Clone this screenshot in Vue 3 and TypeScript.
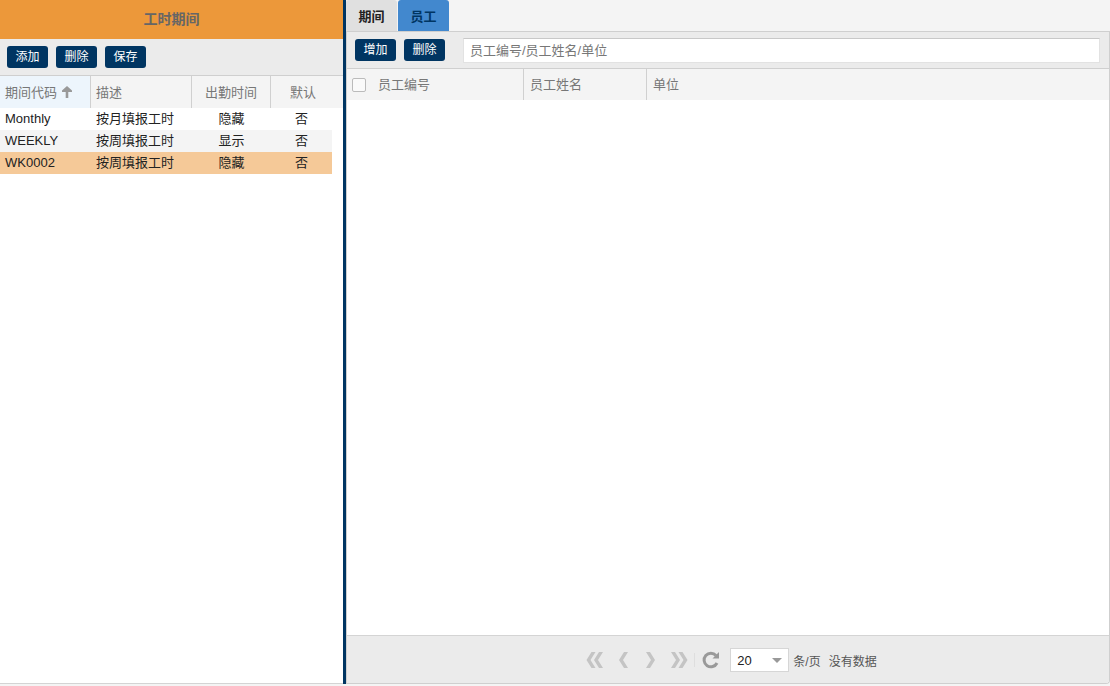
<script setup lang="ts">
import { ref } from 'vue'

interface Period {
  code: string
  description: string
  attendance: string
  isDefault: string
}

const periods: Period[] = [
  { code: 'Monthly', description: '按月填报工时', attendance: '隐藏', isDefault: '否' },
  { code: 'WEEKLY', description: '按周填报工时', attendance: '显示', isDefault: '否' },
  { code: 'WK0002', description: '按周填报工时', attendance: '隐藏', isDefault: '否' },
]

const selectedCode = ref('WK0002')
const activeTab = ref('员工')
const tabs = ['期间', '员工']
const keyword = ref('')
const pageSize = ref(20)
const allChecked = ref(false)
</script>

<template>
  <div class="page">
    <aside class="periods">
      <h1 class="title">工时期间</h1>
      <div class="toolbar">
        <button type="button" class="btn">添加</button>
        <button type="button" class="btn">删除</button>
        <button type="button" class="btn">保存</button>
      </div>
      <table class="grid period-grid">
        <colgroup>
          <col class="c-code" />
          <col class="c-desc" />
          <col class="c-att" />
          <col />
          <col class="c-gutter" />
        </colgroup>
        <thead>
          <tr>
            <th class="sorted" aria-sort="ascending">
              期间代码<svg class="arrow" viewBox="0 0 10 12" aria-hidden="true">
                <path d="M5 0 10 4.5V6H6.3V12H3.7V6H0V4.5Z" />
              </svg>
            </th>
            <th>描述</th>
            <th class="center">出勤时间</th>
            <th class="center last" colspan="2">默认</th>
          </tr>
        </thead>
        <tbody>
          <tr
            v-for="period in periods"
            :key="period.code"
            :class="{ selected: period.code === selectedCode }"
            @click="selectedCode = period.code"
          >
            <td>{{ period.code }}</td>
            <td>{{ period.description }}</td>
            <td class="center">{{ period.attendance }}</td>
            <td class="center">{{ period.isDefault }}</td>
            <td class="gutter"></td>
          </tr>
        </tbody>
      </table>
    </aside>

    <div class="splitter"></div>

    <main class="detail">
      <div class="tabs" role="tablist">
        <button
          v-for="tab in tabs"
          :key="tab"
          type="button"
          role="tab"
          class="tab"
          :class="{ active: tab === activeTab }"
          :aria-selected="tab === activeTab"
          @click="activeTab = tab"
        >{{ tab }}</button>
      </div>
      <section class="panel">
        <div class="toolbar staff-toolbar">
          <button type="button" class="btn">增加</button>
          <button type="button" class="btn">删除</button>
          <input
            v-model="keyword"
            class="search"
            type="text"
            placeholder="员工编号/员工姓名/单位"
            aria-label="员工编号/员工姓名/单位"
          />
        </div>
        <table class="grid staff-grid">
          <colgroup>
            <col class="c-check" />
            <col class="c-id" />
            <col class="c-name" />
            <col />
          </colgroup>
          <thead>
            <tr>
              <th class="check-cell">
                <input v-model="allChecked" class="check" type="checkbox" aria-label="全选" />
              </th>
              <th>员工编号</th>
              <th>员工姓名</th>
              <th class="last">单位</th>
            </tr>
          </thead>
        </table>
        <div class="empty"></div>
        <footer class="pager">
          <button type="button" class="nav" aria-label="首页" disabled>
            <svg viewBox="0 0 18 18"><path d="M5.5 1H9.5L4.5 9 9.5 17H5.5L0.5 9ZM13 1H17L12 9 17 17H13L8 9Z" /></svg>
          </button>
          <button type="button" class="nav" aria-label="上一页" disabled>
            <svg viewBox="0 0 18 18"><path d="M10 1H14L9 9 14 17H10L5 9Z" /></svg>
          </button>
          <button type="button" class="nav" aria-label="下一页" disabled>
            <svg viewBox="0 0 18 18"><path d="M8 1H4L9 9 4 17H8L13 9Z" /></svg>
          </button>
          <button type="button" class="nav" aria-label="末页" disabled>
            <svg viewBox="0 0 18 18"><path d="M5 1H1L6 9 1 17H5L10 9ZM12.5 1H8.5L13.5 9 8.5 17H12.5L17.5 9Z" /></svg>
          </button>
          <span class="divider"></span>
          <button type="button" class="nav refresh" aria-label="刷新">
            <svg viewBox="0 0 18 18">
              <path class="ring" d="M14 4.5A6.8 6.8 0 1 0 15 12" />
              <path d="M17 1V7.5H10.5Z" />
            </svg>
          </button>
          <span class="select-box">
            <select id="page-size" v-model="pageSize" class="size">
              <option :value="20">20</option>
              <option :value="50">50</option>
              <option :value="100">100</option>
            </select>
            <svg class="caret" viewBox="0 0 10 5" aria-hidden="true"><path d="M0 0H10L5 5Z" /></svg>
          </span>
          <label for="page-size">条/页</label>
          <span class="status">没有数据</span>
        </footer>
      </section>
    </main>
  </div>
</template>

<style>
body {
  background: #f4f4f4;
}
</style>

<style scoped>
.page {
  box-sizing: border-box;
  display: flex;
  height: 100vh;
  padding-bottom: 2px;
  font-family: 'Liberation Sans', 'Noto Sans CJK SC', sans-serif;
  font-size: 13px;
  color: #222;
}

.page *,
.page *::before {
  box-sizing: border-box;
}

button,
input,
select {
  font-family: inherit;
  margin: 0;
}

.periods {
  flex: 0 0 343px;
  background: #fff;
  border-bottom: 1px solid #d4d4d4;
}

.title {
  height: 39px;
  margin: 0;
  background: #ec983a;
  color: #666;
  font-size: 14px;
  line-height: 39px;
  text-align: center;
}

.toolbar {
  display: flex;
  align-items: center;
  gap: 8px;
  height: 37px;
  padding: 0 7px;
  background: #ebebeb;
  border-bottom: 1px solid #cfcfcf;
}

.btn {
  width: 41px;
  height: 22px;
  padding: 0;
  border: 0;
  border-radius: 3px;
  background: #003562;
  color: #fff;
  font-size: 12px;
  line-height: 22px;
}

.grid {
  width: 100%;
  table-layout: fixed;
  border-collapse: separate;
  border-spacing: 0;
}

.grid th {
  height: 32px;
  padding: 1px 5px 0;
  border-right: 1px solid #d0d0d0;
  background: #f4f4f4;
  color: #777;
  font-weight: 400;
  line-height: 20px;
  text-align: left;
  white-space: nowrap;
}

.grid th.last {
  border-right: 0;
}

.grid th.sorted {
  background: #edf5fc;
}

.grid td {
  height: 22px;
  padding: 0 5px;
  line-height: 22px;
  white-space: nowrap;
}

.grid .center {
  text-align: center;
}

.period-grid th.last {
  padding-right: 13px;
}

.period-grid tbody tr:nth-child(even) td {
  background: #f4f4f4;
}

.period-grid tbody tr.selected td {
  background: #f5c998;
}

.period-grid tbody tr td.gutter {
  padding: 0;
  background: #fff;
}

.c-code { width: 91px; }
.c-desc { width: 101px; }
.c-att { width: 79px; }
.c-gutter { width: 11px; }
.c-check { width: 25px; }
.c-id { width: 152px; }
.c-name { width: 123px; }

.arrow {
  width: 10px;
  height: 12px;
  margin-left: 5px;
  vertical-align: -1px;
  fill: #999;
}

.splitter {
  flex: 0 0 3px;
  background: #003562;
}

.detail {
  flex: 1;
  display: flex;
  flex-direction: column;
  min-width: 0;
}

.tabs {
  display: flex;
  gap: 1px;
  height: 32px;
  background: #f4f4f4;
  border-bottom: 1px solid #cfcfcf;
}

.tab {
  width: 51px;
  padding: 0;
  border: 0;
  border-radius: 3px 3px 0 0;
  background: #e0e0e0;
  color: #222;
  font-size: 13px;
  font-weight: 700;
}

.tab.active {
  background: #4288ce;
  color: #003562;
}

.panel {
  flex: 1;
  display: flex;
  flex-direction: column;
  overflow: hidden;
  border: 1px solid #cfcfcf;
  border-top: 0;
  border-radius: 0 0 4px 0;
  background: #fff;
}

.staff-toolbar {
  padding: 0 9px 0 8px;
}

.search {
  flex: 1;
  min-width: 0;
  height: 25px;
  margin-left: 10px;
  padding: 0 6px;
  border: 1px solid #e2e2e2;
  border-top-color: #c8c8c8;
  background: #fff;
  color: #222;
  font-size: 13px;
}

.search::placeholder {
  color: #777;
}

.staff-grid th {
  height: 31px;
  padding: 1px 6px 0;
}

.staff-grid .check-cell {
  padding: 0 0 0 5px;
  border-right: 0;
}

.check {
  display: block;
  appearance: none;
  width: 14px;
  height: 14px;
  border: 1px solid #bbb;
  border-radius: 2px;
  background: #fafafa;
}

.check:checked {
  background: #4288ce;
}

.empty {
  flex: 1;
}

.pager {
  display: flex;
  align-items: center;
  justify-content: center;
  height: 48px;
  padding: 1px 0 0 7px;
  border-top: 1px solid #d4d4d4;
  background: #ebebeb;
  color: #555;
  font-size: 12px;
}

.nav {
  display: block;
  width: 18px;
  height: 18px;
  margin-right: 10px;
  padding: 0;
  border: 0;
  background: none;
}

.nav svg {
  display: block;
  width: 18px;
  height: 18px;
  fill: #c4c4c4;
}

.refresh svg {
  fill: #999;
}

.refresh .ring {
  fill: none;
  stroke: #999;
  stroke-width: 3;
}

.divider {
  width: 1px;
  height: 14px;
  margin: 0 7px 0 -4px;
  background: #dedede;
}

.select-box {
  position: relative;
  margin-right: 4px;
}

.size {
  display: block;
  appearance: none;
  width: 59px;
  height: 24px;
  padding: 0 6px;
  border: 1px solid #d6d6d6;
  border-radius: 0;
  background: #fff;
  color: #222;
  font-size: 13px;
}

.caret {
  position: absolute;
  top: 10px;
  right: 7px;
  width: 10px;
  height: 5px;
  fill: #999;
  pointer-events: none;
}

.status {
  margin-left: 8px;
}
</style>
